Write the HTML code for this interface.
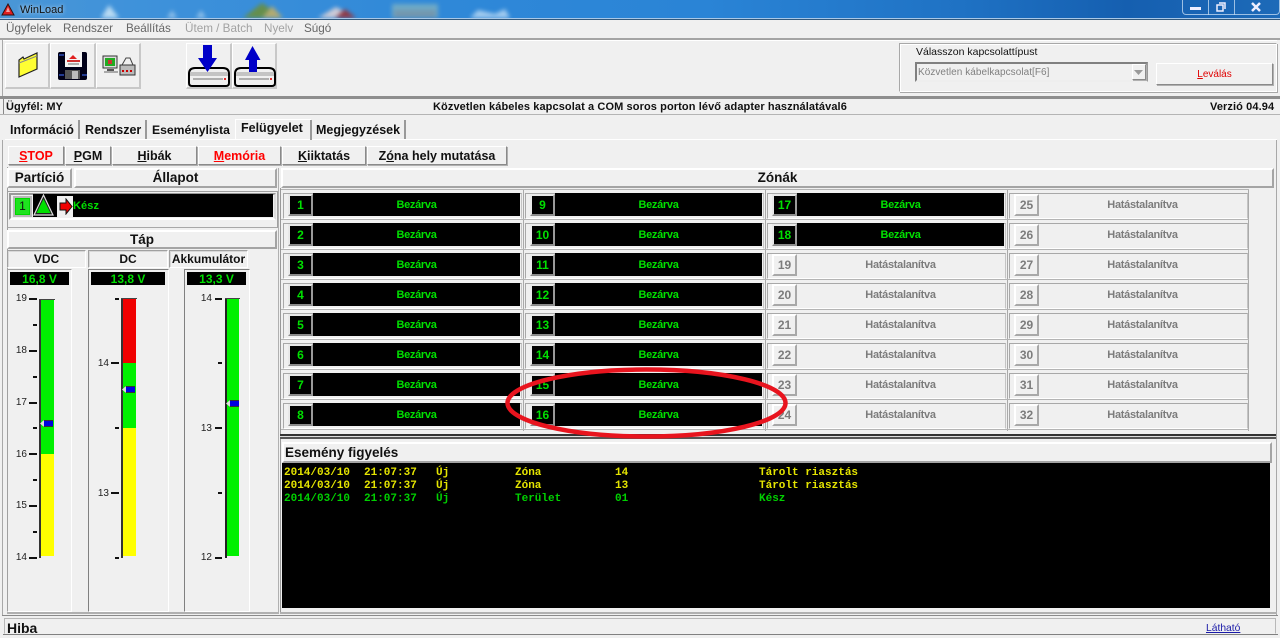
<!DOCTYPE html>
<html><head><meta charset="utf-8"><title>WinLoad</title>
<style>
html,body{margin:0;padding:0;background:#f0f0f0}
#p{position:relative;width:1280px;height:638px;overflow:hidden;background:#f0f0f0;font-family:"Liberation Sans",sans-serif;color:#000}
#p div{position:absolute;box-sizing:border-box}
.t{white-space:nowrap;line-height:14px}
.b{font-weight:bold}
.btn{background:#f0f0f0;border:1px solid;border-color:#fff #8a8a8a #8a8a8a #fff;box-shadow:1px 1px 0 #b0b0b0;text-align:center;font-weight:bold;white-space:nowrap}
.tb{background:#f0f0f0;border:1px solid #fff;border-right:2px solid #c8c8c8;border-bottom:2px solid #c8c8c8}
.hl{background:#f0f0f0;border:2px solid;border-color:#fff #a4a4a4 #a4a4a4 #fff;font-weight:bold;text-align:center;white-space:nowrap}
.gh{background:#f0f0f0;border:1px solid;border-color:#a0a0a0 #fff #fff #a0a0a0;box-shadow:inset 1px 1px 0 #d8d8d8;font-weight:bold;text-align:center;font-size:12px;line-height:17px;white-space:nowrap}
.z{width:235px;height:23px;color:#00e000;font-size:11px;font-weight:bold;text-align:center;line-height:25px;letter-spacing:-.3px}
.z .fr{left:-2px;top:0;width:239px;height:26px;border:1px solid;border-color:#a8a8a8 #c4c4c4 #fff #a8a8a8}
.z b{position:absolute;box-sizing:border-box;left:3px;top:1px;width:25px;height:22px;background:#000;border:2px solid;border-color:#e8e8e8 #9a9a9a #8a8a8a #e8e8e8;font-size:12px;line-height:18px;text-align:center;color:#00e000;letter-spacing:0;outline:0}
.z span{position:absolute;left:28px;right:0;top:0;height:23px;background:#000;text-align:center}
.z.o{color:#7c7c7c}
.z.o span{background:transparent}
.z.o b{background:#f0f0f0;color:#7c7c7c;border-color:#fff #a8a8a8 #a8a8a8 #fff}
.c1{left:285px}.c2{left:527px}.c3{left:769px}.c4{left:1011px}
.r1{top:193px}.r2{top:223px}.r3{top:253px}.r4{top:283px}.r5{top:313px}.r6{top:343px}.r7{top:373px}.r8{top:403px}
.rl{left:281px;width:968px;height:1px;background:#b4b4b4}
.log{font-family:"Liberation Mono",monospace;font-size:11px;font-weight:bold;line-height:13px;white-space:nowrap}
.y{color:#e4e400}.g{color:#00d000}
.n{font-size:10px;line-height:12px;color:#222;text-align:right;width:16px}
.k{background:#111;height:2px}
.mk{background:#0000e0;height:7px;border-top:1px solid #333;border-bottom:1px solid #333}
.rd{background:#000;color:#00e000;font-weight:bold;font-size:12px;line-height:14px;text-align:center}
</style></head><body><div id="p">

<!-- title bar -->
<div style="left:0;top:0;width:1280px;height:19px;background:linear-gradient(90deg,#4a96d6 0,#3f92da 10%,#2f88d8 35%,#2a84d6 55%,#1f72c4 75%,#155fb0 88%,#1d6ab8 100%)"></div>
<svg style="position:absolute;left:0;top:0" width="560" height="18"><g style="filter:blur(2px)" opacity=".85"><path d="M109 5L101 18H119Z" fill="#cfe8f8"/><path d="M172 10L167 18H177ZM201 10L196 18H206Z" fill="#9ec8ec"/><path d="M262 3L243 18H283Z" fill="#6d8f34"/><path d="M272 6L262 18H283Z" fill="#c8b060"/><path d="M336 7L318 18H356Z" fill="#e8d8d8"/><path d="M345 9L335 18H356Z" fill="#a02a2a"/><rect x="392" y="4" width="46" height="14" fill="#7ab0c4"/><rect x="394" y="10" width="42" height="8" fill="#7f9aa8"/><path d="M478 10L470 18H510L505 9 495 14Z" fill="#b8d8f4"/></g></svg>
<div style="left:0;top:18px;width:1280px;height:1px;background:#a8c8e8"></div>
<div style="left:0;top:19px;width:1280px;height:1px;background:#33597c"></div>
<svg style="position:absolute;left:1px;top:3px" width="14" height="13"><path d="M7 1L13 12H1Z" fill="#e02020" stroke="#301010" stroke-width="1"/><path d="M7 4L9 9H5Z" fill="#f6a0a0"/></svg>
<div class="t" style="left:20px;top:3px;font-size:11px;color:#111;text-shadow:0 0 4px rgba(255,255,255,.8)">WinLoad</div>
<div style="left:1182px;top:-1px;width:98px;height:16px;border:1px solid rgba(190,215,240,.8);border-top:0;border-radius:0 0 4px 4px"></div>
<div style="left:1208px;top:0;width:1px;height:15px;background:rgba(190,215,240,.8)"></div>
<div style="left:1234px;top:0;width:1px;height:15px;background:rgba(190,215,240,.8)"></div>
<div style="left:1190px;top:7px;width:11px;height:3px;background:#eef"></div>
<svg style="position:absolute;left:1215px;top:1px" width="12" height="12"><path d="M4 2H10V8M2 4H8V10H2Z" fill="none" stroke="#eef" stroke-width="1.500"/></svg>
<svg style="position:absolute;left:1249px;top:2px" width="14" height="10"><path d="M3 1L11 9M11 1L3 9" stroke="#eef" stroke-width="2.500"/></svg>

<!-- menu -->
<div style="left:0;top:20px;width:1280px;height:18px;background:#f0f0f0"></div>
<div class="t" style="left:6px;top:22px;font-size:11.7px;color:#666">Ügyfelek</div>
<div class="t" style="left:63px;top:22px;font-size:11.7px;color:#666">Rendszer</div>
<div class="t" style="left:126px;top:22px;font-size:11.7px;color:#666">Beállítás</div>
<div class="t" style="left:185px;top:22px;font-size:11.7px;color:#a2a2a2">Ütem / Batch</div>
<div class="t" style="left:264px;top:22px;font-size:11.7px;color:#a2a2a2">Nyelv</div>
<div class="t" style="left:304px;top:22px;font-size:11.7px;color:#666">Súgó</div>

<!-- toolbar -->
<div style="left:0;top:38px;width:1280px;height:2px;background:#a4a4a4"></div>
<div style="left:2px;top:40px;width:1275px;height:1px;background:#fff"></div>
<div style="left:2px;top:40px;width:1px;height:56px;background:#a8a8a8"></div>
<div class="tb" style="left:5px;top:43px;width:45px;height:46px"></div>
<div class="tb" style="left:50px;top:43px;width:46px;height:46px"></div>
<div class="tb" style="left:96px;top:43px;width:45px;height:46px"></div>
<div class="tb" style="left:186px;top:43px;width:46px;height:46px"></div>
<div class="tb" style="left:232px;top:43px;width:45px;height:46px"></div>
<svg style="position:absolute;left:16px;top:51px" width="24" height="28"><path d="M3 26V9L7 6 8 8 21 2V18L3 26Z" fill="#ffff33" stroke="#222" stroke-width="1.200"/><path d="M3 12L21 5" stroke="#888" stroke-width="1"/></svg>
<svg style="position:absolute;left:57px;top:51px" width="32" height="30"><rect x="1" y="1" width="29" height="28" rx="2" fill="#000018"/><path d="M2 4H7M2 24H7M25 24H30" stroke="#223a90" stroke-width="2"/><rect x="8" y="1" width="17" height="15" fill="#f4f4f4"/><path d="M12 8L16 4 20 8Z" fill="#e02020"/><rect x="10" y="9" width="13" height="2" fill="#d03030"/><path d="M11 13H22" stroke="#666"/><rect x="8" y="19" width="15" height="9" fill="#555"/><rect x="15" y="20" width="6" height="8" fill="#bbb"/></svg>
<svg style="position:absolute;left:102px;top:55px" width="34" height="22"><rect x="1" y="1" width="14" height="12" fill="#ddd" stroke="#333"/><rect x="3" y="3" width="10" height="8" fill="#22aa22"/><rect x="6" y="5" width="4" height="4" fill="#c33"/><rect x="5" y="14" width="7" height="2" fill="#555"/><rect x="2" y="16" width="14" height="2" fill="#aaa"/><rect x="18" y="10" width="15" height="10" fill="#bbb" stroke="#333"/><path d="M20 10L24 3H28L31 10" fill="none" stroke="#444"/><path d="M20 16h2M24 16h2M28 16h2" stroke="#c00" stroke-width="2"/></svg>
<svg style="position:absolute;left:187px;top:44px" width="44" height="44"><path d="M2 39V30Q2 24 8 24H36Q42 24 42 30V39Q42 42 39 42H5Q2 42 2 39Z" fill="#f0f0f0" stroke="#000" stroke-width="2"/><path d="M3 30H41" stroke="#c4c4c4" stroke-width="4"/><path d="M6 35H36" stroke="#999" stroke-width="1.500"/><rect x="37" y="34" width="2" height="2" fill="#e03030"/><path d="M16 1H25V14H30L20.500 28 11 14H16Z" fill="#0000c8"/></svg>
<svg style="position:absolute;left:233px;top:44px" width="44" height="44"><path d="M2 39V30Q2 24 8 24H36Q42 24 42 30V39Q42 42 39 42H5Q2 42 2 39Z" fill="#f0f0f0" stroke="#000" stroke-width="2"/><path d="M3 30H41" stroke="#c4c4c4" stroke-width="4"/><path d="M6 35H36" stroke="#999" stroke-width="1.500"/><rect x="37" y="34" width="2" height="2" fill="#e03030"/><path d="M16 28H24V16H27.500L19.500 2 12 16H16Z" fill="#0000c8"/></svg>

<!-- connection group -->
<div style="left:899px;top:43px;width:378px;height:49px;border:1px solid;border-color:#a8a8a8 #fff #fff #a8a8a8;box-shadow:1px 1px 0 #a8a8a8,inset 1px 1px 0 #fff"></div>
<div class="t" style="left:916px;top:45px;font-size:10.5px;color:#111">Válasszon kapcsolattípust</div>
<div style="left:915px;top:62px;width:233px;height:20px;background:#f0f0f0;border:2px solid;border-color:#808080 #999 #eee #808080"></div>
<div class="t" style="left:918px;top:66px;font-size:10px;color:#808080;letter-spacing:.05px">Közvetlen kábelkapcsolat[F6]</div>
<div class="btn" style="left:1132px;top:64px;width:14px;height:16px"></div>
<svg style="position:absolute;left:1134px;top:70px" width="9" height="5"><path d="M0 0H9L4.500 5Z" fill="#9a9a9a"/></svg>
<div class="btn" style="left:1156px;top:63px;width:117px;height:22px;font-weight:normal;color:#e00000;font-size:10px;line-height:21px"><u>L</u>eválás</div>

<!-- info line -->
<div style="left:0;top:96px;width:1280px;height:3px;background:#8e8e8e"></div>
<div style="left:3px;top:99px;width:1274px;height:15px;background:#f0f0f0;border-left:1px solid #888"></div>
<div style="left:0;top:114px;width:1280px;height:1px;background:#b4b4b4"></div>
<div class="t b" style="left:6px;top:100px;font-size:11px;color:#111">Ügyfél: MY</div>
<div class="t b" style="left:433px;top:100px;font-size:11px;letter-spacing:.1px;color:#111">Közvetlen kábeles kapcsolat a COM soros porton lévő adapter használatával6</div>
<div class="t b" style="left:1210px;top:100px;font-size:11px;letter-spacing:.1px;color:#111">Verzió 04.94</div>

<!-- tabs -->
<div style="left:5px;top:139px;width:1272px;height:1px;background:#fff"></div>
<div style="left:78px;top:120px;width:2px;height:19px;background:#999"></div>
<div style="left:145px;top:120px;width:2px;height:19px;background:#999"></div>
<div style="left:235px;top:120px;width:1px;height:20px;background:#fff"></div>
<div style="left:310px;top:120px;width:2px;height:20px;background:#999"></div>
<div style="left:404px;top:120px;width:2px;height:19px;background:#999"></div>
<div style="left:235px;top:119px;width:76px;height:1px;background:#fff"></div>
<div class="t b" style="left:10px;top:123px;font-size:12.5px;color:#111">Információ</div>
<div class="t b" style="left:85px;top:123px;font-size:12.5px;color:#111">Rendszer</div>
<div class="t b" style="left:152px;top:123px;font-size:12.2px;color:#111">Eseménylista</div>
<div class="t b" style="left:241px;top:121px;font-size:12.5px;color:#111">Felügyelet</div>
<div class="t b" style="left:316px;top:123px;font-size:12.5px;color:#111">Megjegyzések</div>

<!-- subtabs -->
<div style="left:2px;top:140px;width:1px;height:475px;background:#a8a8a8"></div>
<div style="left:1276px;top:140px;width:1px;height:475px;background:#a8a8a8"></div>
<div class="btn" style="left:8px;top:146px;width:56px;height:19px;color:#f00;font-size:12.5px;line-height:18px"><u>S</u>TOP</div>
<div class="btn" style="left:65px;top:146px;width:46px;height:19px;font-size:12.5px;line-height:18px;color:#111"><u>P</u>GM</div>
<div class="btn" style="left:112px;top:146px;width:85px;height:19px;font-size:12.5px;line-height:18px;color:#111"><u>H</u>ibák</div>
<div class="btn" style="left:198px;top:146px;width:83px;height:19px;color:#f00;font-size:12.5px;line-height:18px"><u>M</u>emória</div>
<div class="btn" style="left:282px;top:146px;width:84px;height:19px;font-size:12.5px;line-height:18px;color:#111"><u>K</u>iiktatás</div>
<div class="btn" style="left:367px;top:146px;width:140px;height:19px;font-size:12.5px;line-height:18px;color:#111">Z<u>ó</u>na hely mutatása</div>

<!-- left panel -->
<div style="left:7px;top:167px;width:1px;height:445px;background:#a0a0a0"></div>
<div class="hl" style="left:7px;top:168px;width:65px;height:20px;font-size:13.5px;line-height:16px;color:#111">Partíció</div>
<div class="hl" style="left:74px;top:168px;width:203px;height:20px;font-size:13.5px;line-height:16px;color:#111">Állapot</div>
<div style="left:7px;top:191px;width:271px;height:37px;border:1px solid;border-color:#a0a0a0 #a0a0a0 #a8a8a8 #a0a0a0"></div>
<div style="left:9px;top:193px;width:267px;height:27px;border:2px solid;border-color:#999 #ddd #fff #999"></div>
<div style="left:33px;top:194px;width:240px;height:23px;background:#000"></div>
<div style="left:13px;top:196px;width:19px;height:21px;border:2px solid #b8b8b8;background:#00d800"></div>
<div style="left:16px;top:199px;width:13px;height:15px;background:#1fe31f;font-size:12px;line-height:15px;text-align:center;color:#111">1</div>
<svg style="position:absolute;left:33px;top:194px" width="21" height="22"><path d="M10.500 1L20 21H1Z" fill="#222" stroke="#ddd" stroke-width="1.200"/><path d="M10.500 5L17.500 19H3.500Z" fill="#00e000"/></svg>
<div style="left:57px;top:196px;width:16px;height:21px;background:#f0f0f0"></div>
<svg style="position:absolute;left:59px;top:198px" width="14" height="17"><path d="M1 5H7V1L13 8.500 7 16V12H1Z" fill="#f00000" stroke="#111" stroke-width="1"/></svg>
<div class="t b" style="left:73px;top:199px;font-size:11px;color:#00e000;letter-spacing:.1px">Kész</div>

<div class="hl" style="left:7px;top:230px;width:270px;height:19px;font-size:13.5px;line-height:15px;color:#111">Táp</div>
<div class="gh" style="left:7px;top:250px;width:79px;height:18px;color:#111">VDC</div>
<div class="gh" style="left:88px;top:250px;width:80px;height:18px;color:#111">DC</div>
<div class="gh" style="left:169px;top:250px;width:79px;height:18px;color:#111">Akkumulátor</div>

<div style="left:7px;top:269px;width:65px;height:343px;border:1px solid;border-color:#a0a0a0 #fff #fff #a0a0a0"></div>
<div style="left:88px;top:269px;width:81px;height:343px;border:1px solid;border-color:#808080 #fff #fff #808080"></div>
<div style="left:184px;top:269px;width:66px;height:343px;border:1px solid;border-color:#808080 #fff #fff #808080"></div>
<div style="left:7px;top:612px;width:272px;height:2px;background:#b0b0b0"></div>
<div style="left:278px;top:168px;width:1px;height:446px;background:#b0b0b0"></div>

<div class="rd" style="left:10px;top:272px;width:59px;height:13px">16,8 V</div>
<div class="rd" style="left:91px;top:272px;width:74px;height:13px">13,8 V</div>
<div class="rd" style="left:187px;top:272px;width:59px;height:13px">13,3 V</div>

<!-- VDC gauge -->
<div style="left:39px;top:299px;width:2px;height:259px;background:#333"></div>
<div style="left:41px;top:300px;width:13px;height:154px;background:#00f000"></div>
<div style="left:41px;top:454px;width:13px;height:102px;background:#ffff00"></div>
<div style="left:39px;top:299px;width:16px;height:1px;background:#444"></div>
<div class="n" style="left:11px;top:293px">19</div><div class="k" style="left:29px;top:298px;width:8px"></div>
<div class="k" style="left:33px;top:324px;width:4px"></div>
<div class="n" style="left:11px;top:345px">18</div><div class="k" style="left:29px;top:350px;width:8px"></div>
<div class="k" style="left:33px;top:376px;width:4px"></div>
<div class="n" style="left:11px;top:397px">17</div><div class="k" style="left:29px;top:402px;width:8px"></div>
<div class="k" style="left:33px;top:427px;width:4px"></div>
<div class="n" style="left:11px;top:449px">16</div><div class="k" style="left:29px;top:453px;width:8px"></div>
<div class="k" style="left:33px;top:479px;width:4px"></div>
<div class="n" style="left:11px;top:500px">15</div><div class="k" style="left:29px;top:505px;width:8px"></div>
<div class="k" style="left:33px;top:531px;width:4px"></div>
<div class="n" style="left:11px;top:552px">14</div><div class="k" style="left:29px;top:557px;width:8px"></div>
<div class="mk" style="left:43px;top:420px;width:10px"></div>
<svg style="position:absolute;left:40px;top:420px" width="4" height="7"><path d="M4 0V7L0 3.500Z" fill="#ddd"/></svg>

<!-- DC gauge -->
<div style="left:121px;top:299px;width:2px;height:259px;background:#333"></div>
<div style="left:123px;top:299px;width:13px;height:64px;background:#f00000"></div>
<div style="left:123px;top:363px;width:13px;height:65px;background:#00f000"></div>
<div style="left:123px;top:428px;width:13px;height:128px;background:#ffff00"></div>
<div style="left:121px;top:298px;width:16px;height:1px;background:#444"></div>
<div class="k" style="left:115px;top:298px;width:4px"></div>
<div class="n" style="left:93px;top:358px">14</div><div class="k" style="left:111px;top:362px;width:8px"></div>
<div class="k" style="left:115px;top:427px;width:4px"></div>
<div class="n" style="left:93px;top:488px">13</div><div class="k" style="left:111px;top:492px;width:8px"></div>
<div class="k" style="left:115px;top:557px;width:4px"></div>
<div class="mk" style="left:125px;top:386px;width:10px"></div>
<svg style="position:absolute;left:122px;top:386px" width="4" height="7"><path d="M4 0V7L0 3.500Z" fill="#ddd"/></svg>

<!-- Akku gauge -->
<div style="left:225px;top:299px;width:2px;height:259px;background:#222"></div>
<div style="left:227px;top:299px;width:12px;height:257px;background:#00f000"></div>
<div style="left:225px;top:298px;width:15px;height:1px;background:#444"></div>
<div class="n" style="left:196px;top:293px">14</div><div class="k" style="left:215px;top:298px;width:7px"></div>
<div class="k" style="left:218px;top:362px;width:4px"></div>
<div class="n" style="left:196px;top:423px">13</div><div class="k" style="left:215px;top:427px;width:7px"></div>
<div class="k" style="left:218px;top:492px;width:4px"></div>
<div class="n" style="left:196px;top:552px">12</div><div class="k" style="left:215px;top:557px;width:7px"></div>
<div class="mk" style="left:229px;top:400px;width:10px"></div>
<svg style="position:absolute;left:226px;top:400px" width="4" height="7"><path d="M4 0V7L0 3.500Z" fill="#ddd"/></svg>

<!-- zones header -->
<div class="hl" style="left:281px;top:168px;width:993px;height:20px;font-size:13.5px;line-height:16px;color:#111">Zónák</div>
<div style="left:280px;top:188px;width:1px;height:246px;background:#999"></div>
<div style="left:523px;top:190px;width:1px;height:241px;background:#aaa"></div>
<div style="left:765px;top:190px;width:1px;height:241px;background:#aaa"></div>
<div style="left:1007px;top:190px;width:1px;height:241px;background:#aaa"></div>
<div style="left:1248px;top:190px;width:1px;height:241px;background:#aaa"></div>
<div class="rl" style="top:189px"></div>
<div class="rl" style="top:219px"></div>
<div class="rl" style="top:249px"></div>
<div class="rl" style="top:279px"></div>
<div class="rl" style="top:309px"></div>
<div class="rl" style="top:339px"></div>
<div class="rl" style="top:369px"></div>
<div class="rl" style="top:399px"></div>
<div class="rl" style="top:429px"></div>

<div class="z c1 r1"><div class="fr"></div><b>1</b><span>Bezárva</span></div>
<div class="z c1 r2"><div class="fr"></div><b>2</b><span>Bezárva</span></div>
<div class="z c1 r3"><div class="fr"></div><b>3</b><span>Bezárva</span></div>
<div class="z c1 r4"><div class="fr"></div><b>4</b><span>Bezárva</span></div>
<div class="z c1 r5"><div class="fr"></div><b>5</b><span>Bezárva</span></div>
<div class="z c1 r6"><div class="fr"></div><b>6</b><span>Bezárva</span></div>
<div class="z c1 r7"><div class="fr"></div><b>7</b><span>Bezárva</span></div>
<div class="z c1 r8"><div class="fr"></div><b>8</b><span>Bezárva</span></div>
<div class="z c2 r1"><div class="fr"></div><b>9</b><span>Bezárva</span></div>
<div class="z c2 r2"><div class="fr"></div><b>10</b><span>Bezárva</span></div>
<div class="z c2 r3"><div class="fr"></div><b>11</b><span>Bezárva</span></div>
<div class="z c2 r4"><div class="fr"></div><b>12</b><span>Bezárva</span></div>
<div class="z c2 r5"><div class="fr"></div><b>13</b><span>Bezárva</span></div>
<div class="z c2 r6"><div class="fr"></div><b>14</b><span>Bezárva</span></div>
<div class="z c2 r7"><div class="fr"></div><b>15</b><span>Bezárva</span></div>
<div class="z c2 r8"><div class="fr"></div><b>16</b><span>Bezárva</span></div>
<div class="z c3 r1"><div class="fr"></div><b>17</b><span>Bezárva</span></div>
<div class="z c3 r2"><div class="fr"></div><b>18</b><span>Bezárva</span></div>
<div class="z o c3 r3"><div class="fr"></div><b>19</b><span>Hatástalanítva</span></div>
<div class="z o c3 r4"><div class="fr"></div><b>20</b><span>Hatástalanítva</span></div>
<div class="z o c3 r5"><div class="fr"></div><b>21</b><span>Hatástalanítva</span></div>
<div class="z o c3 r6"><div class="fr"></div><b>22</b><span>Hatástalanítva</span></div>
<div class="z o c3 r7"><div class="fr"></div><b>23</b><span>Hatástalanítva</span></div>
<div class="z o c3 r8"><div class="fr"></div><b>24</b><span>Hatástalanítva</span></div>
<div class="z o c4 r1"><div class="fr"></div><b>25</b><span>Hatástalanítva</span></div>
<div class="z o c4 r2"><div class="fr"></div><b>26</b><span>Hatástalanítva</span></div>
<div class="z o c4 r3"><div class="fr"></div><b>27</b><span>Hatástalanítva</span></div>
<div class="z o c4 r4"><div class="fr"></div><b>28</b><span>Hatástalanítva</span></div>
<div class="z o c4 r5"><div class="fr"></div><b>29</b><span>Hatástalanítva</span></div>
<div class="z o c4 r6"><div class="fr"></div><b>30</b><span>Hatástalanítva</span></div>
<div class="z o c4 r7"><div class="fr"></div><b>31</b><span>Hatástalanítva</span></div>
<div class="z o c4 r8"><div class="fr"></div><b>32</b><span>Hatástalanítva</span></div>

<!-- event log -->
<div style="left:280px;top:434px;width:996px;height:2px;background:#333"></div>
<div style="left:280px;top:436px;width:996px;height:1px;background:#ddd"></div>
<div style="left:280px;top:437px;width:996px;height:2px;background:#555"></div>
<div style="left:280px;top:439px;width:1px;height:173px;background:#999"></div>
<div class="hl" style="left:282px;top:442px;width:990px;height:21px;font-size:13.5px;line-height:17px;text-align:left;padding-left:1px;color:#111">Esemény figyelés</div>
<div style="left:282px;top:463px;width:988px;height:145px;background:#000"></div>

<!-- red ellipse -->
<svg style="position:absolute;left:500px;top:360px" width="300" height="85"><ellipse cx="146.500" cy="43" rx="139" ry="33.500" fill="none" stroke="#e8141e" stroke-width="4.500"/></svg>

<div class="log y" style="left:284px;top:467px">2014/03/10</div><div class="log y" style="left:364px;top:467px">21:07:37</div><div class="log y" style="left:436px;top:467px">Új</div><div class="log y" style="left:515px;top:467px">Zóna</div><div class="log y" style="left:615px;top:467px">14</div><div class="log y" style="left:759px;top:467px">Tárolt riasztás</div>
<div class="log y" style="left:284px;top:480px">2014/03/10</div><div class="log y" style="left:364px;top:480px">21:07:37</div><div class="log y" style="left:436px;top:480px">Új</div><div class="log y" style="left:515px;top:480px">Zóna</div><div class="log y" style="left:615px;top:480px">13</div><div class="log y" style="left:759px;top:480px">Tárolt riasztás</div>
<div class="log g" style="left:284px;top:493px">2014/03/10</div><div class="log g" style="left:364px;top:493px">21:07:37</div><div class="log g" style="left:436px;top:493px">Új</div><div class="log g" style="left:515px;top:493px">Terület</div><div class="log g" style="left:615px;top:493px">01</div><div class="log g" style="left:759px;top:493px">Kész</div>

<div style="left:280px;top:612px;width:997px;height:2px;background:#b0b0b0"></div>

<!-- status bar -->
<div style="left:2px;top:615px;width:1276px;height:1px;background:#8a8a8a"></div>
<div style="left:4px;top:618px;width:1272px;height:16px;background:#f0f0f0;border:1px solid;border-color:#b8b8b8 #b8b8b8 transparent #b8b8b8"></div>
<div style="left:3px;top:634px;width:1275px;height:1px;background:#808080"></div>
<div class="t b" style="left:7px;top:621px;font-size:14px;color:#111">Hiba</div>
<div class="t" style="left:1206px;top:622px;font-size:10.3px;color:#1a1aa8;text-decoration:underline">Látható</div>

</div></body></html>
